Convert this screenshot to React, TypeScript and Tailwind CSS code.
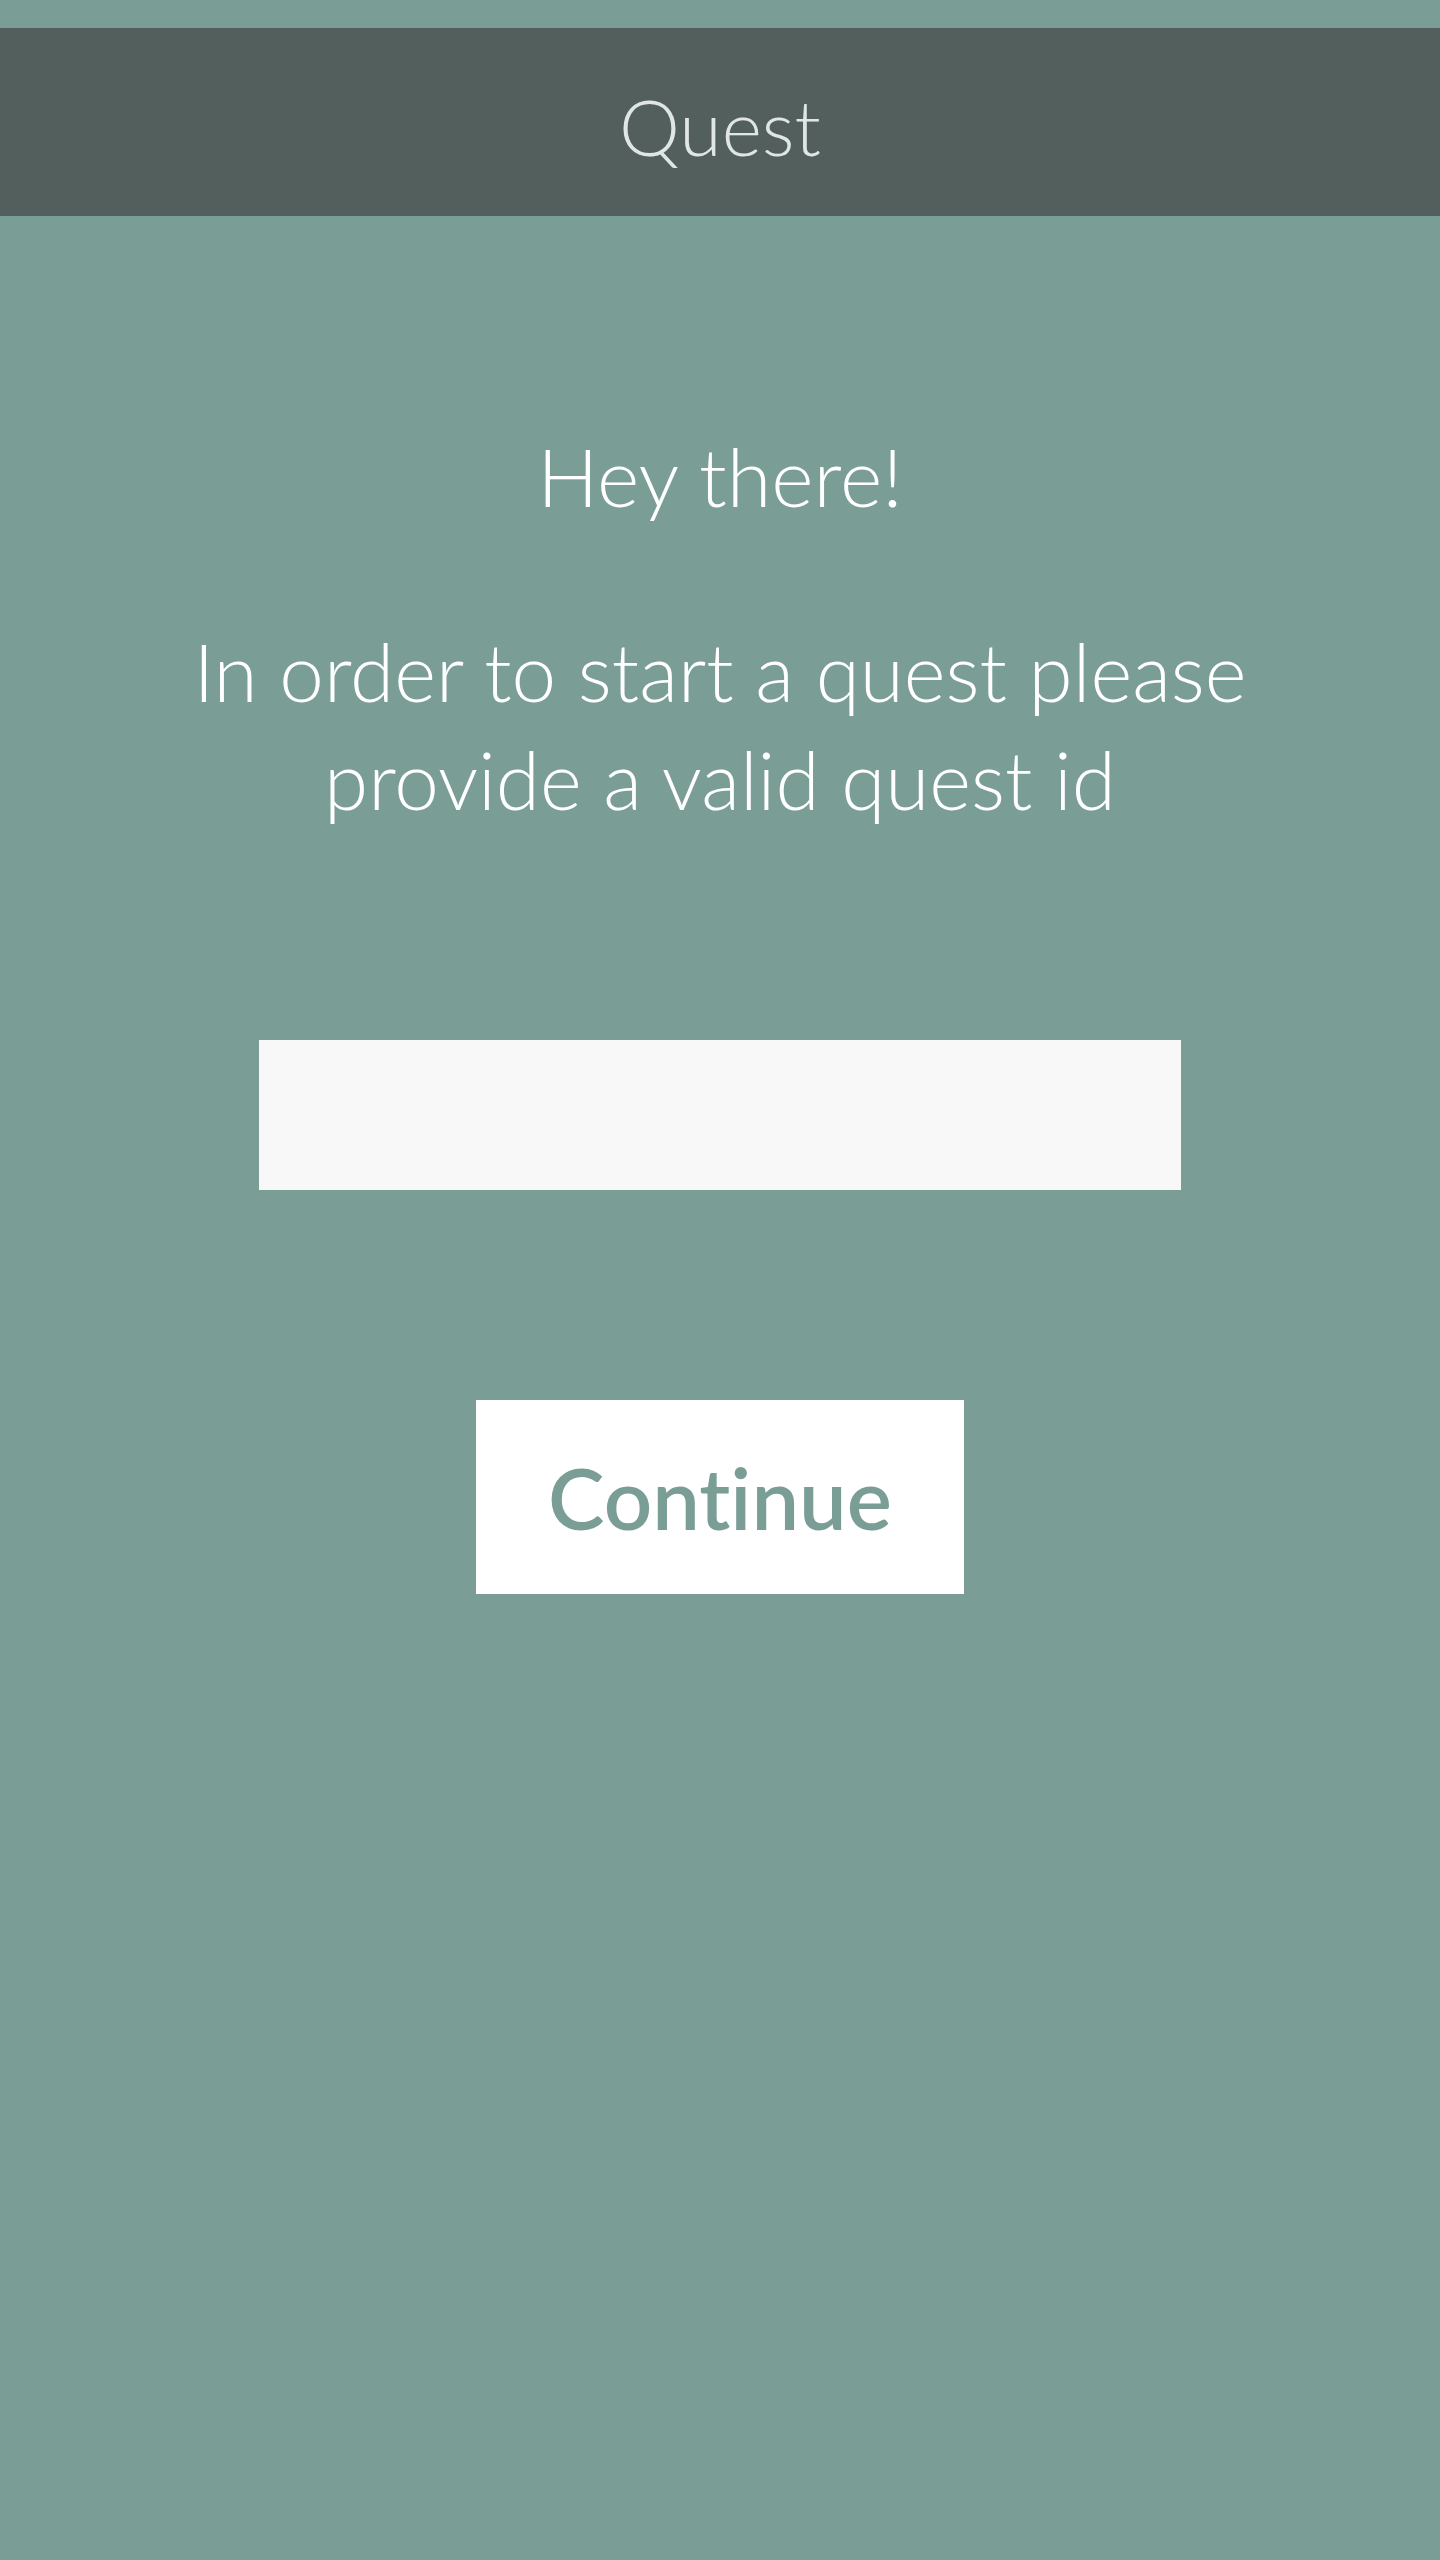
export default function App() {
  return (
    <div
      className="min-h-screen bg-[#7a9e96] pt-[28px] text-white"
      style={{ fontFamily: "Lato, 'Open Sans', sans-serif" }}
    >
      <header className="flex h-[188px] items-center justify-center bg-[#535f5d]">
        <h1 className="pt-[8px] text-[77px] font-light leading-none text-[#dfe6e3]">Quest</h1>
      </header>

      <main className="flex flex-col items-center">
        <h2 className="mt-[215px] text-[81px] font-light leading-[89px]">Hey there!</h2>
        <p className="mt-[97px] text-center text-[80px] font-light leading-[108px]">
          In order to start a quest please
          <br />
          provide a valid quest id
        </p>

        <input
          type="text"
          className="mt-[207px] h-[150px] w-[922px] bg-[#f8f8f8] px-6 text-[60px] text-[#535f5d] outline-none"
        />

        <button
          type="button"
          className="mt-[210px] h-[194px] w-[488px] bg-white text-[85px] font-semibold leading-none text-[#7a9e96] [font-variant-ligatures:none]"
        >
          Continue
        </button>
      </main>
    </div>
  );
}
